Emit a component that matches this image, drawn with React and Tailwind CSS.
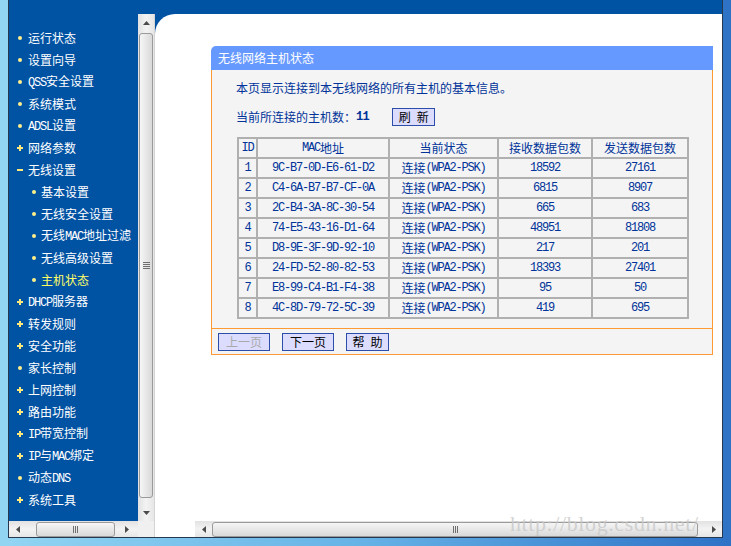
import React from "react";

// ASCII runs use a mono face so they get SimSun-like half-width glyphs
function Txt({ s }) {
  return s
    .split(/([\x20-\x7e]+)/)
    .filter(Boolean)
    .map((p, i) =>
      /^[\x20-\x7e]+$/.test(p) ? (
        <span key={i} className="whitespace-pre font-['Liberation_Mono',monospace] text-[12px] tracking-[-1.2px]">
          {p}
        </span>
      ) : (
        <span key={i}>{p}</span>
      )
    );
}

const menu = [
  ["dot", "运行状态"],
  ["dot", "设置向导"],
  ["dot", "QSS安全设置"],
  ["dot", "系统模式"],
  ["dot", "ADSL设置"],
  ["plus", "网络参数"],
  ["minus", "无线设置"],
  ["sub", "基本设置"],
  ["sub", "无线安全设置"],
  ["sub", "无线MAC地址过滤"],
  ["sub", "无线高级设置"],
  ["active", "主机状态"],
  ["plus", "DHCP服务器"],
  ["plus", "转发规则"],
  ["plus", "安全功能"],
  ["dot", "家长控制"],
  ["plus", "上网控制"],
  ["plus", "路由功能"],
  ["plus", "IP带宽控制"],
  ["plus", "IP与MAC绑定"],
  ["dot", "动态DNS"],
  ["plus", "系统工具"],
];

const hosts = [
  ["1", "9C-B7-0D-E6-61-D2", "18592", "27161"],
  ["2", "C4-6A-B7-B7-CF-0A", "6815", "8907"],
  ["3", "2C-B4-3A-8C-30-54", "665", "683"],
  ["4", "74-E5-43-16-D1-64", "48951", "81808"],
  ["5", "D8-9E-3F-9D-92-10", "217", "201"],
  ["6", "24-FD-52-80-82-53", "18393", "27401"],
  ["7", "E8-99-C4-B1-F4-38", "95", "50"],
  ["8", "4C-8D-79-72-5C-39", "419", "695"],
];

const Dot = () => <span className="block w-[4px] h-[4px] rounded-full bg-[#fff08a]" />;

function Marker({ type }) {
  if (type === "plus")
    return (
      <svg width="6" height="6" viewBox="0 0 6 6">
        <rect x="0" y="2" width="6" height="2" fill="#ffe97a" />
        <rect x="2" y="0" width="2" height="6" fill="#ffe97a" />
      </svg>
    );
  if (type === "minus") return <span className="block w-[6px] h-[2px] bg-[#ffe97a]" />;
  return <Dot />;
}

const Arrow = ({ dir }) => {
  const pts = {
    up: "0,4 3.5,0 7,4",
    down: "0,0 7,0 3.5,4",
    left: "4,0 4,7 0,3.5",
    right: "0,0 4,3.5 0,7",
  }[dir];
  const v = dir === "up" || dir === "down";
  return (
    <svg width={v ? 7 : 4} height={v ? 4 : 7}>
      <polygon points={pts} fill="#4b4b4b" />
    </svg>
  );
};

function HThumb({ className }) {
  return (
    <div className={`h-[15px] rounded-[3px] border border-[#9a9a9a] bg-gradient-to-b from-[#f6f6f6] to-[#d9d9d9] flex items-center justify-center gap-[1px] ${className}`}>
      <span className="w-[1px] h-[7px] bg-[#6f6f6f]" />
      <span className="w-[1px] h-[7px] bg-[#6f6f6f]" />
      <span className="w-[1px] h-[7px] bg-[#6f6f6f]" />
    </div>
  );
}

function Btn({ children, w, disabled }) {
  return (
    <div
      className={`${w} h-[18px] border border-[#2d4ea8] bg-[#dcdcff] flex items-center justify-center leading-none ${
        disabled ? "text-[#a9a9a9]" : "text-black"
      }`}
    >
      {children}
    </div>
  );
}

export default function App() {
  return (
    <div className="relative w-[731px] h-[546px] overflow-hidden bg-gradient-to-r from-[#92d5f3] via-[#66b2e6] to-[#2e72c6] px-[8px] pb-[8px] font-['Noto_Sans_CJK_SC',sans-serif] text-[12px]">
      <div className="h-full flex flex-col border-x border-b border-[#26384f] bg-white">
        {/* top strip */}
        <div className="h-[14px] shrink-0 bg-[#0052a3]" />

        <div className="flex flex-1 min-h-0">
          {/* left menu frame */}
          <div className="w-[146px] shrink-0 flex flex-col border-r border-[#d4d4d4]">
            <div className="flex flex-1 min-h-0">
              <div className="w-[129px] bg-[#0052a3] pt-[13px] overflow-hidden">
                {menu.map(([type, label]) => {
                  const sub = type === "sub" || type === "active";
                  return (
                    <div key={label} className="h-[22px] flex items-center whitespace-nowrap leading-none">
                      <div className={`${sub ? "w-[32px] pl-[23px]" : type === "dot" ? "w-[19px] pl-[9px]" : "w-[19px] pl-[8px]"} flex items-center`}>
                        <Marker type={type} />
                      </div>
                      <span className={type === "active" ? "text-[#ffff66]" : "text-white"}>
                        <Txt s={label} />
                      </span>
                    </div>
                  );
                })}
              </div>
              {/* vertical scrollbar */}
              <div className="w-[16px] flex flex-col bg-gradient-to-r from-[#e2e2e2] via-[#f3f3f3] to-[#e6e6e6]">
                <div className="h-[17px] flex items-center justify-center">
                  <Arrow dir="up" />
                </div>
                <div className="flex-1 px-[1px] pt-[2px]">
                  <div className="h-[465px] rounded-[3px] border border-[#9a9a9a] bg-gradient-to-r from-[#f6f6f6] to-[#d9d9d9] flex flex-col items-center justify-center gap-[1px]">
                    <span className="w-[7px] h-[1px] bg-[#6f6f6f]" />
                    <span className="w-[7px] h-[1px] bg-[#6f6f6f]" />
                    <span className="w-[7px] h-[1px] bg-[#6f6f6f]" />
                    <span className="w-[7px] h-[1px] bg-[#6f6f6f]" />
                  </div>
                </div>
                <div className="h-[17px] flex items-center justify-center">
                  <Arrow dir="down" />
                </div>
              </div>
            </div>
            {/* horizontal scrollbar */}
            <div className="h-[16px] shrink-0 flex">
              <div className="w-[129px] flex items-center bg-gradient-to-b from-[#e2e2e2] via-[#f3f3f3] to-[#e6e6e6]">
                <div className="w-[17px] flex justify-center">
                  <Arrow dir="left" />
                </div>
                <HThumb className="ml-[10px] w-[79px]" />
                <div className="flex-1 flex justify-center">
                  <Arrow dir="right" />
                </div>
              </div>
              <div className="flex-1 bg-[#f0f0f0]" />
            </div>
          </div>

          {/* main frame */}
          <div className="flex-1 bg-[#0052a3]">
            <div className="h-full flex flex-col bg-white rounded-tl-[20px]">
              <div className="flex-1 min-h-0 pl-[56px] pt-[32px]">
                <div className="w-[502px]">
                  <div className="h-[24px] bg-[#6699ff] rounded-tl-[5px] pl-[7px] flex items-center text-white leading-none">
                    无线网络主机状态
                  </div>
                  <div className="border-x border-b border-[#ff9933] bg-[#f4f4f4] pl-[24px] pt-[10px] pb-[9px] text-[#003399]">
                    <div className="h-[16px] leading-[16px]">本页显示连接到本无线网络的所有主机的基本信息。</div>
                    <div className="mt-[12px] h-[18px] flex items-center leading-none">
                      <span>当前所连接的主机数：</span>
                      <span className="font-['Liberation_Mono',monospace] font-bold text-[12px] tracking-[-0.6px]">11</span>
                      <div className="ml-[23px]">
                        <Btn w="w-[43px]">
                          <Txt s="刷 新" />
                        </Btn>
                      </div>
                    </div>
                    <div className="mt-[11px] ml-[1px] w-[452px] grid grid-cols-[17px_130px_107px_92px_94px] auto-rows-[18px] gap-[2px] p-[2px] bg-[#b0b0b0] leading-none">
                      {["ID", "MAC地址", "当前状态", "接收数据包数", "发送数据包数"].map((h) => (
                        <div key={h} className="bg-[#f4f4f4] flex items-center justify-center whitespace-nowrap">
                          <Txt s={h} />
                        </div>
                      ))}
                      {hosts.map((r) => (
                        <React.Fragment key={r[0]}>
                          <div className="bg-[#f4f4f4] flex items-center justify-center">
                            <Txt s={r[0]} />
                          </div>
                          <div className="bg-[#f4f4f4] flex items-center justify-center">
                            <Txt s={r[1]} />
                          </div>
                          <div className="bg-[#f4f4f4] flex items-center justify-center whitespace-nowrap">
                            <Txt s="连接(WPA2-PSK)" />
                          </div>
                          <div className="bg-[#f4f4f4] flex items-center justify-center">
                            <Txt s={r[2]} />
                          </div>
                          <div className="bg-[#f4f4f4] flex items-center justify-center">
                            <Txt s={r[3]} />
                          </div>
                        </React.Fragment>
                      ))}
                    </div>
                  </div>
                  <div className="h-[26px] border-x border-b border-[#ff9933] bg-[#f4f4f4] pl-[6px] pt-[4px] flex gap-[12px]">
                    <Btn w="w-[52px]" disabled>
                      上一页
                    </Btn>
                    <Btn w="w-[52px]">下一页</Btn>
                    <Btn w="w-[43px]">
                      <Txt s="帮 助" />
                    </Btn>
                  </div>
                </div>
              </div>
              {/* bottom scrollbar of main frame */}
              <div className="h-[16px] shrink-0 flex">
                <div className="w-[40px]" />
                <div className="flex-1 flex items-center bg-gradient-to-b from-[#e2e2e2] via-[#f3f3f3] to-[#e6e6e6]">
                  <div className="w-[17px] flex justify-center">
                    <Arrow dir="left" />
                  </div>
                  <HThumb className="w-[486px]" />
                  <div className="flex-1 flex justify-end pr-[6px]">
                    <Arrow dir="right" />
                  </div>
                </div>
              </div>
            </div>
          </div>
        </div>
      </div>

      {/* csdn watermark */}
      <div className="absolute left-[510px] top-[513px] font-['Liberation_Serif',serif] text-[22px] leading-none tracking-[0.6px] text-[#c8c8c8]/80">
        http://blog.csdn.net/
      </div>
    </div>
  );
}
